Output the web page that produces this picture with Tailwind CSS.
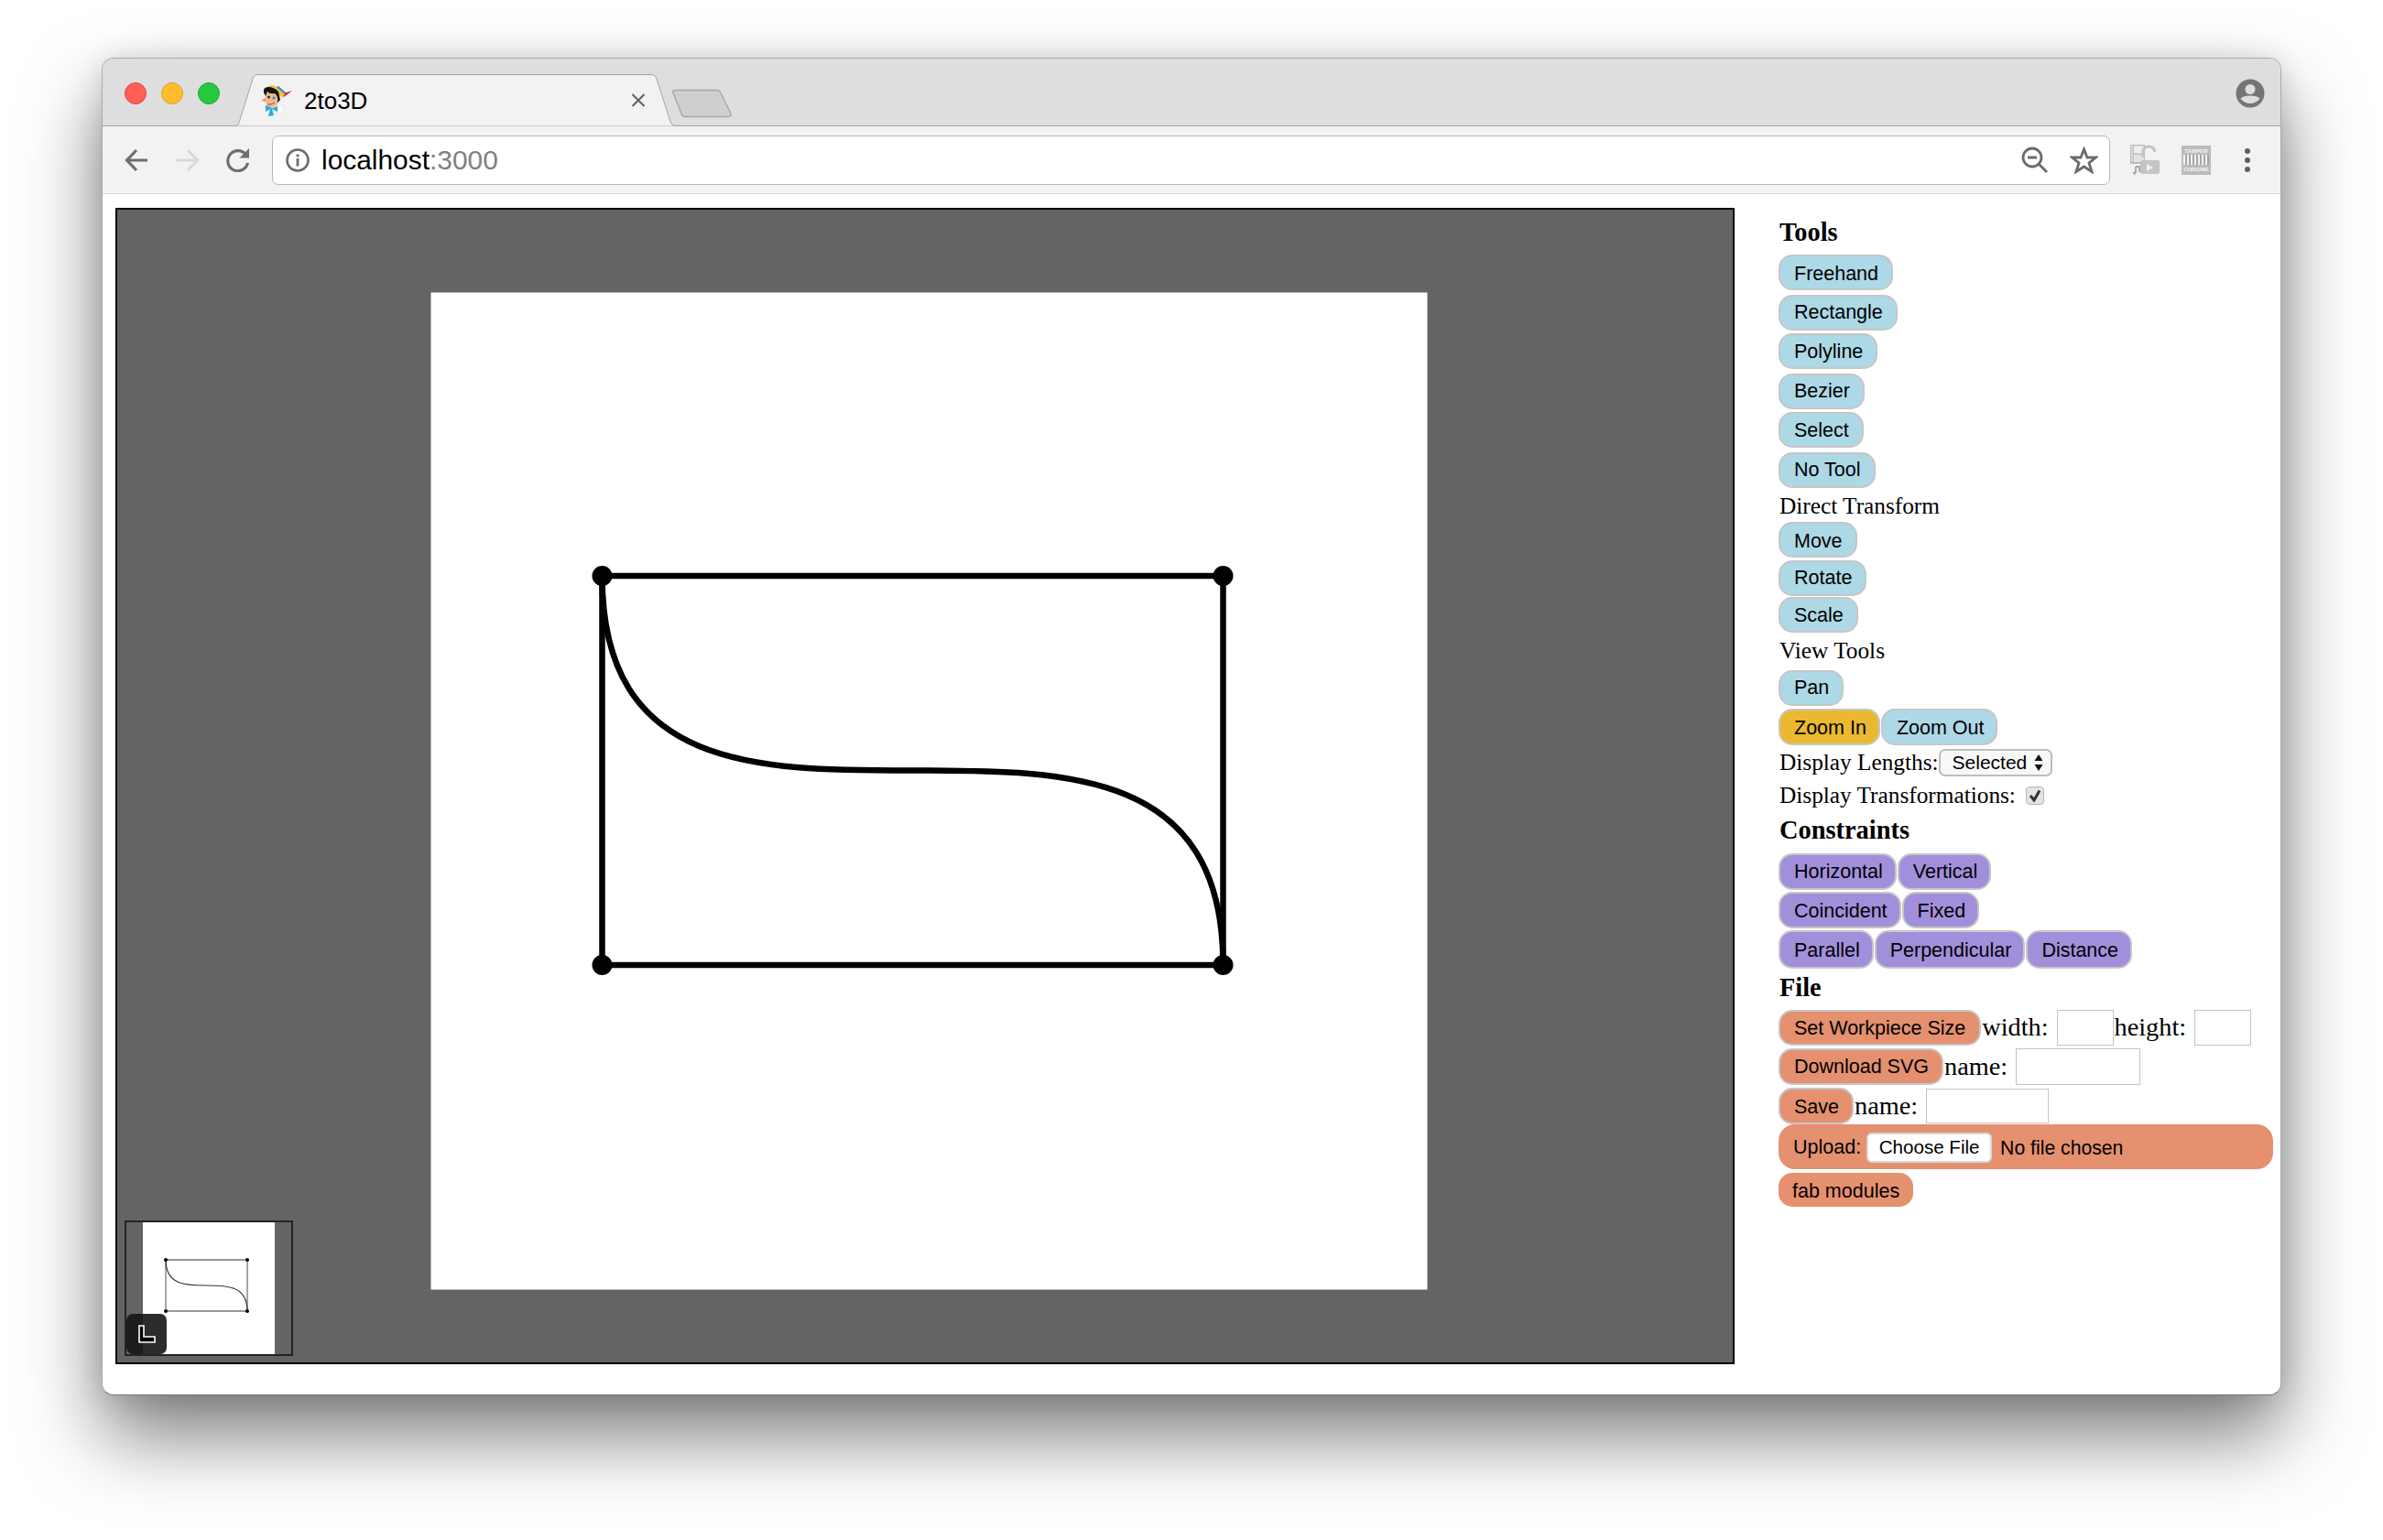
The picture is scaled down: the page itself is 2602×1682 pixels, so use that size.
<!DOCTYPE html>
<html lang="en">
<head>
    <meta charset="UTF-8">
    <title>2to3D</title>
    <script src="https://cdn.jsdelivr.net/npm/@tailwindcss/browser@4"></script>
</head>
<body class="bg-white w-[2602px] h-[1682px] overflow-hidden pt-[63px] pl-[111px] font-['Liberation_Serif',serif] text-black">
    <div class="w-[2380px] h-[1461px] rounded-[13px] border border-[#a9a9a9] border-b-[#777] bg-white overflow-hidden shadow-[0_44px_85px_rgba(0,0,0,0.52),0_0_30px_rgba(0,0,0,0.12)]">

        <!-- title bar -->
        <div class="h-[74px] bg-[#dedede] border-b border-[#a3a3a3] flex items-start font-['Liberation_Sans',sans-serif]">
            <div class="flex gap-[16px] pl-[24px] pt-[26px]">
                <div class="w-[24px] h-[24px] rounded-full bg-[#ff5f57] border border-[#e0443e]"></div>
                <div class="w-[24px] h-[24px] rounded-full bg-[#ffbd2e] border border-[#dea123]"></div>
                <div class="w-[24px] h-[24px] rounded-full bg-[#28c940] border border-[#1aab29]"></div>
            </div>
            <div class="relative w-[486px] h-[57px] mt-[17px] ml-[15px] flex items-center shrink-0">
                <svg class="absolute inset-0" width="486" height="57" viewBox="0 0 486 57">
                    <path d="M0.5 56.5 L2 56.5 Q5 56.5 6 53 L21 5 Q22.5 0.5 27 0.5 L456 0.5 Q460.5 0.5 462 5 L477 52 Q478.5 56.5 483 56.5 L486 56.5" fill="#f2f2f2" stroke="#a3a3a3"/>
                </svg>
                <svg class="relative ml-[30px]" width="34" height="34" viewBox="6 5 34 34">
                    <path d="M30 14 L40 11 L31 18Z" fill="#d8252c"/>
                    <path d="M14 6 Q20 4 23 7 L32 14 L30 19 L26 16 Q20 9 14 9Z" fill="#f0c030"/>
                    <path d="M23 7 L25 6 L33 13 L32 15Z" fill="#3f7fd0"/>
                    <path d="M25 28 L31 27 L31 36 L23 36Z" fill="#fafafa" stroke="#d5d5d5" stroke-width="0.5"/>
                    <path d="M11 14 Q10 24 13 28 Q20 31 24 26 Q27 20 25 15 L16 12Z" fill="#f0b98d"/>
                    <path d="M9 13 Q8 7 14 7 Q20 7 25 12 L27 21 L24 24 Q25 17 21 14 Q15 15 13 12 L11 17Z" fill="#141414"/>
                    <path d="M11 19 L7 21 Q7 23 11 23Z" fill="#e39a6c"/>
                    <circle cx="14.5" cy="18" r="1.5" fill="#2a2a2a"/>
                    <circle cx="20" cy="19" r="1.4" fill="#2a7fa8"/>
                    <path d="M13 26 Q17 27 21 24" fill="none" stroke="#a04a30" stroke-width="1"/>
                    <path d="M16 29 L11 27 L11 34 L16 31 L14 39 L20 38 L18 31 L24 34 L24 28 L18 30Z" fill="#29a9e0"/>
                </svg>
                <span class="relative ml-[13px] text-[26px] leading-none">2to3D</span>
                <svg class="absolute left-[434px] top-[21px]" width="16" height="15" viewBox="0 0 16 15">
                    <path d="M1.5 1 L14.5 14 M14.5 1 L1.5 14" stroke="#5f5f5f" stroke-width="2"/>
                </svg>
            </div>
            <svg class="mt-[33px] -ml-[7px] shrink-0" width="68" height="32" viewBox="0 0 68 32">
                <path d="M3 1.5 L48 1.5 Q52 1.5 53 4.5 L64 27 Q65 30.5 61 30.5 L15 30.5 Q11 30.5 10 27 L1 4.5 Q0 1.5 3 1.5Z" fill="#cfcfcf" stroke="#a9a9a9" stroke-width="1.5"/>
            </svg>
            <svg class="ml-auto mr-[17px] mt-[22px] shrink-0" width="32" height="32" viewBox="0 0 32 32">
                <circle cx="16" cy="16" r="15.5" fill="#757575"/>
                <circle cx="16" cy="11.5" r="5.5" fill="#dedede"/>
                <path d="M5.5 22 Q7 18.5 16 18.5 Q25 18.5 26.5 22 Q22 27 16 27 Q10 27 5.5 22Z" fill="#dedede"/>
            </svg>
        </div>

        <!-- toolbar -->
        <div class="h-[74px] bg-[#f2f2f2] border-b border-[#d4d4d4] flex items-center font-['Liberation_Sans',sans-serif]">
            <svg class="ml-[24px] shrink-0" width="26" height="26" viewBox="0 0 26 26" fill="none" stroke="#6e6e6e" stroke-width="3.2">
                <path d="M25 13 H3 M13 2 L2.5 13 L13 24"/>
            </svg>
            <svg class="ml-[29px] shrink-0" width="27" height="26" viewBox="0 0 27 26" fill="none" stroke="#d9d9d9" stroke-width="3.2">
                <path d="M1 13 H24 M14 2 L24.5 13 L14 24"/>
            </svg>
            <svg class="ml-[29px] -mt-[1px] shrink-0" width="26" height="27" viewBox="0 0 26 27">
                <path d="M21.5 8 A11 11 0 1 0 23.5 17" fill="none" stroke="#6e6e6e" stroke-width="3.2"/>
                <path d="M25 1 V11.5 H14.5Z" fill="#6e6e6e"/>
            </svg>
            <div class="ml-[24px] w-[2007px] h-[54px] bg-white border border-[#b8b8b8] rounded-[7px] flex items-center shrink-0">
                <svg class="ml-[14px] shrink-0" width="26" height="26" viewBox="0 0 26 26">
                    <circle cx="13" cy="13" r="11.5" fill="none" stroke="#6b6b6b" stroke-width="2.6"/>
                    <rect x="11.6" y="6.5" width="2.8" height="2.8" fill="#6b6b6b"/>
                    <rect x="11.6" y="11" width="2.8" height="8.5" fill="#6b6b6b"/>
                </svg>
                <span class="ml-[13px] text-[29.9px] leading-none">localhost<span class="text-[#808080]">:3000</span></span>
                <svg class="ml-auto -mr-[1px] shrink-0" width="30" height="30" viewBox="0 0 30 30" fill="none" stroke="#6b6b6b" stroke-width="2.8">
                    <circle cx="12" cy="12" r="10"/>
                    <path d="M7 12 H17 M19.5 19.5 L28 28"/>
                </svg>
                <svg class="ml-[24px] mr-[12px] shrink-0" width="31" height="30" viewBox="0 0 31 30">
                    <path d="M15.5 3 L19 12 L28.5 12 L21 18 L24 27.5 L15.5 22 L7 27.5 L10 18 L2.5 12 L12 12Z" fill="none" stroke="#6b6b6b" stroke-width="2.8"/>
                </svg>
            </div>
            <svg class="ml-[22px] shrink-0" width="33" height="33" viewBox="0 0 33 33">
                <rect x="0" y="0" width="16" height="21" fill="#bdbdbd"/>
                <rect x="4" y="1.5" width="11" height="8" fill="#efefef"/>
                <rect x="4" y="11" width="11" height="8" fill="#e4e4e4"/>
                <path d="M1 2 h2 M1 5 h2 M1 8 h2 M1 11 h2 M1 14 h2 M1 17 h2" stroke="#f2f2f2" stroke-width="1.3"/>
                <path d="M14 14 V8 Q14 2 20 2 Q26 2 27 8" fill="none" stroke="#c4c4c4" stroke-width="3"/>
                <rect x="11" y="17" width="21" height="15" rx="2" fill="#c4c4c4"/>
                <path d="M18 21 L25 25 L18 29Z" fill="#f2f2f2"/>
                <path d="M6 24 V31 M6 24 L10 24 V30" fill="none" stroke="#a5a5a5" stroke-width="1.8"/>
                <circle cx="4.5" cy="31" r="1.6" fill="#a5a5a5"/>
            </svg>
            <div class="ml-[23px] w-[32px] h-[32px] bg-[#bcbcbc] flex flex-col items-center justify-center shrink-0 font-bold text-[6.2px] leading-[7px] text-[#f4f4f4] overflow-hidden">
                <span>TAMPER</span>
                <div class="w-[28px] h-[11px] my-[1px] bg-[repeating-linear-gradient(90deg,#f4f4f4_0_2px,#a6a6a6_2px_4px)]"></div>
                <span>CHROME</span>
            </div>
            <div class="ml-[37px] flex flex-col gap-[4px] shrink-0">
                <div class="w-[6px] h-[6px] rounded-full bg-[#5f5f5f]"></div>
                <div class="w-[6px] h-[6px] rounded-full bg-[#5f5f5f]"></div>
                <div class="w-[6px] h-[6px] rounded-full bg-[#5f5f5f]"></div>
            </div>
        </div>

        <!-- page -->
        <div class="flex items-start">
            <div class="relative ml-[14px] mt-[15px] w-[1768px] h-[1263px] border-2 border-black bg-[#636466] shrink-0">
                <svg class="block" width="1764" height="1259" viewBox="128 228 1764 1259">
                    <rect x="470.5" y="318.5" width="1088" height="1089" fill="#fff"/>
                    <g fill="none" stroke="#000" stroke-width="6.5">
                        <path d="M657.5 628 H1335.5 V1053 H657.5Z"/>
                        <path d="M657.5 628 C657.5 1053 1335.5 628 1335.5 1053"/>
                    </g>
                    <circle cx="657.5" cy="628" r="11"/>
                    <circle cx="1335.5" cy="628" r="11"/>
                    <circle cx="657.5" cy="1053" r="11"/>
                    <circle cx="1335.5" cy="1053" r="11"/>
                </svg>
                <!-- minimap -->
                <div class="absolute left-[8px] bottom-[7px] w-[184px] h-[148px] border-2 border-[#222325]">
                    <svg class="block" width="180" height="144" viewBox="138 1334 180 144">
                        <rect x="156" y="1334" width="144" height="144" fill="#fff"/>
                        <path d="M181 1375 H270 V1431 H181Z" fill="none" stroke="#777" stroke-width="1.3"/>
                        <path d="M181 1375 C181 1431 270 1375 270 1431" fill="none" stroke="#333" stroke-width="1.2"/>
                        <circle cx="181" cy="1375" r="2"/>
                        <circle cx="270" cy="1375" r="2"/>
                        <circle cx="181" cy="1431" r="2"/>
                        <circle cx="270" cy="1431" r="2"/>
                    </svg>
                    <div class="absolute left-0 bottom-0 w-[44px] h-[44px] rounded-[7px] bg-[linear-gradient(90deg,#1c1d1f_18px,#2b2c2e_18px)] flex items-center justify-center">
                        <svg width="20" height="20" viewBox="0 0 20 20">
                            <path d="M2 1 H7 V13 H19 V19 H2Z" fill="#000" stroke="#fff" stroke-width="1.6"/>
                        </svg>
                    </div>
                </div>
            </div>

            <!-- sidebar -->
            <div class="ml-[49px] pt-[26px] w-[545px] shrink-0 flex flex-col items-start">
                <h3 class="h-[32px] leading-[32px] text-[28.4px] font-bold">Tools</h3>
                <button class="mt-[8px] h-[39px] rounded-[15px] border-2 border-[#c6c6c6] bg-[#add8e6] pl-[15px] pr-[14px] pt-[3px] -ml-[1px] text-[21.5px] font-['Liberation_Sans',sans-serif]">Freehand</button>
                <button class="mt-[5px] h-[39px] rounded-[15px] border-2 border-[#c6c6c6] bg-[#add8e6] pl-[15px] pr-[14px] -ml-[1px] text-[21.5px] font-['Liberation_Sans',sans-serif]">Rectangle</button>
                <button class="mt-[3px] h-[39px] rounded-[15px] border-2 border-[#c6c6c6] bg-[#add8e6] pl-[15px] pr-[14px] pt-[2px] -ml-[1px] text-[21.5px] font-['Liberation_Sans',sans-serif]">Polyline</button>
                <button class="mt-[5px] h-[39px] rounded-[15px] border-2 border-[#c6c6c6] bg-[#add8e6] pl-[15px] pr-[14px] -ml-[1px] text-[21.5px] font-['Liberation_Sans',sans-serif]">Bezier</button>
                <button class="mt-[3px] h-[39px] rounded-[15px] border-2 border-[#c6c6c6] bg-[#add8e6] pl-[15px] pr-[14px] pt-[2px] -ml-[1px] text-[21.5px] font-['Liberation_Sans',sans-serif]">Select</button>
                <button class="mt-[5px] h-[39px] rounded-[15px] border-2 border-[#c6c6c6] bg-[#add8e6] pl-[15px] pr-[14px] -ml-[1px] text-[21.5px] font-['Liberation_Sans',sans-serif]">No Tool</button>
                <div class="mt-[3px] h-[32px] leading-[32px] text-[25.3px]">Direct Transform</div>
                <button class="mt-[2px] h-[39px] rounded-[15px] border-2 border-[#c6c6c6] bg-[#add8e6] pl-[15px] pr-[14px] pt-[3px] -ml-[1px] text-[21.5px] font-['Liberation_Sans',sans-serif]">Move</button>
                <button class="mt-[3px] h-[39px] rounded-[15px] border-2 border-[#c6c6c6] bg-[#add8e6] pl-[15px] pr-[14px] -ml-[1px] text-[21.5px] font-['Liberation_Sans',sans-serif]">Rotate</button>
                <button class="mt-[1px] h-[39px] rounded-[15px] border-2 border-[#c6c6c6] bg-[#add8e6] pl-[15px] pr-[14px] pt-[2px] -ml-[1px] text-[21.5px] font-['Liberation_Sans',sans-serif]">Scale</button>
                <div class="mt-[3px] h-[32px] leading-[32px] text-[25.3px]">View Tools</div>
                <button class="mt-[6px] h-[39px] rounded-[15px] border-2 border-[#c6c6c6] bg-[#add8e6] pl-[15px] pr-[14px] -ml-[1px] text-[21.5px] font-['Liberation_Sans',sans-serif]">Pan</button>
                <div class="mt-[3px] -ml-[1px] flex gap-[1px]">
                    <button class="h-[40px] rounded-[15px] border-2 border-[#c6c6c6] bg-[#ebb92f] pl-[15px] pr-[13px] pt-[2px] text-[21.5px] font-['Liberation_Sans',sans-serif]">Zoom In</button>
                    <button class="h-[40px] rounded-[15px] border-2 border-[#c6c6c6] bg-[#add8e6] pl-[15px] pr-[13px] pt-[2px] text-[21.5px] font-['Liberation_Sans',sans-serif]">Zoom Out</button>
                </div>
                <div class="mt-[3px] h-[32px] flex items-center text-[25.3px]">
                    <span>Display Lengths:</span>
                    <div class="w-[124px] h-[30px] rounded-[7px] border-2 border-[#bdbdbd] bg-[#f8f8f8] flex items-center text-[21px] font-['Liberation_Sans',sans-serif]">
                        <span class="ml-[13px]">Selected</span>
                        <svg class="ml-[8px]" width="10" height="18" viewBox="0 0 10 18"><path d="M5 0 L9.5 7 H0.5Z M5 18 L9.5 11 H0.5Z" fill="#111"/></svg>
                    </div>
                </div>
                <div class="mt-[4px] h-[32px] flex items-center text-[25.3px]">
                    <span>Display Transformations:</span>
                    <div class="ml-[11px] w-[20px] h-[20px] rounded-[4px] border border-[#b4b4b4] bg-[#e4e4e4] flex items-center justify-center">
                        <svg width="14" height="14" viewBox="0 0 14 14"><path d="M2 7 L6 12 L12 1.5" fill="none" stroke="#333" stroke-width="3"/></svg>
                    </div>
                </div>
                <h3 class="mt-[6px] h-[32px] leading-[32px] text-[28.4px] font-bold">Constraints</h3>
                <div class="mt-[9px] -ml-[1px] flex gap-[1px]">
                    <button class="h-[40px] rounded-[15px] border-2 border-[#c6c6c6] bg-[#a28fdb] pl-[15px] pr-[13px] text-[21.5px] font-['Liberation_Sans',sans-serif]">Horizontal</button>
                    <button class="h-[40px] rounded-[15px] border-2 border-[#c6c6c6] bg-[#a28fdb] pl-[15px] pr-[13px] text-[21.5px] font-['Liberation_Sans',sans-serif]">Vertical</button>
                </div>
                <div class="mt-[2px] -ml-[1px] flex gap-[1px]">
                    <button class="h-[40px] rounded-[15px] border-2 border-[#c6c6c6] bg-[#a28fdb] pl-[15px] pr-[13px] pt-[2px] text-[21.5px] font-['Liberation_Sans',sans-serif]">Coincident</button>
                    <button class="h-[40px] rounded-[15px] border-2 border-[#c6c6c6] bg-[#a28fdb] pl-[15px] pr-[13px] pt-[2px] text-[21.5px] font-['Liberation_Sans',sans-serif]">Fixed</button>
                </div>
                <div class="mt-[2px] -ml-[1px] flex gap-[1px]">
                    <button class="h-[42px] rounded-[15px] border-2 border-[#c6c6c6] bg-[#a28fdb] pl-[15px] pr-[13px] pt-[2px] text-[21.5px] font-['Liberation_Sans',sans-serif]">Parallel</button>
                    <button class="h-[42px] rounded-[15px] border-2 border-[#c6c6c6] bg-[#a28fdb] pl-[15px] pr-[13px] pt-[2px] text-[21.5px] font-['Liberation_Sans',sans-serif]">Perpendicular</button>
                    <button class="h-[42px] rounded-[15px] border-2 border-[#c6c6c6] bg-[#a28fdb] pl-[15px] pr-[13px] pt-[2px] text-[21.5px] font-['Liberation_Sans',sans-serif]">Distance</button>
                </div>
                <h3 class="mt-[5px] h-[32px] leading-[32px] text-[28.4px] font-bold">File</h3>
                <div class="mt-[8px] -ml-[1px] h-[39px] flex items-center text-[28.3px]">
                    <button class="h-[39px] rounded-[15px] border-2 border-[#c6c6c6] bg-[#e5906f] pl-[15px] pr-[15px] pt-[2px] text-[21.5px] font-['Liberation_Sans',sans-serif]">Set Workpiece Size</button>
                    <span class="ml-[1px]">width:</span>
                    <div class="ml-[9px] w-[62px] h-[39px] border border-[#c4c4c4] bg-white"></div>
                    <span class="ml-[1px]">height:</span>
                    <div class="ml-[9px] w-[62px] h-[39px] border border-[#c4c4c4] bg-white"></div>
                </div>
                <div class="mt-[3px] -ml-[1px] h-[40px] flex items-center text-[28.3px]">
                    <button class="h-[40px] rounded-[15px] border-2 border-[#c6c6c6] bg-[#e5906f] pl-[15px] pr-[14px] text-[21.5px] font-['Liberation_Sans',sans-serif]">Download SVG</button>
                    <span class="ml-[1px]">name:</span>
                    <div class="ml-[9px] w-[136px] h-[40px] border border-[#c4c4c4] bg-white"></div>
                </div>
                <div class="mt-[3px] -ml-[1px] h-[40px] flex items-center text-[28.3px]">
                    <button class="h-[40px] rounded-[15px] border-2 border-[#c6c6c6] bg-[#e5906f] pl-[15px] pr-[14px] pt-[2px] text-[21.5px] font-['Liberation_Sans',sans-serif]">Save</button>
                    <span class="ml-[1px]">name:</span>
                    <div class="ml-[9px] w-[134px] h-[38px] border border-[#c4c4c4] bg-white"></div>
                </div>
                <div class="-ml-[1px] w-[540px] h-[49px] rounded-[18px] bg-[#e5906f] flex items-center pl-[16px] pt-[2px] text-[21.5px] font-['Liberation_Sans',sans-serif]">
                    <span>Upload:</span>
                    <div class="ml-[6px] w-[137px] h-[33px] rounded-[6px] border-2 border-[#d8d8d8] bg-white flex items-center justify-center text-[20.6px]">Choose File</div>
                    <span class="ml-[9px] text-[21.2px]">No file chosen</span>
                </div>
                <div class="mt-[4px] -ml-[1px] h-[37px] rounded-[15px] bg-[#e5906f] px-[15px] pt-[4px] flex items-center text-[21.5px] font-['Liberation_Sans',sans-serif]">fab modules</div>
            </div>
        </div>
    </div>
</body>
</html>
